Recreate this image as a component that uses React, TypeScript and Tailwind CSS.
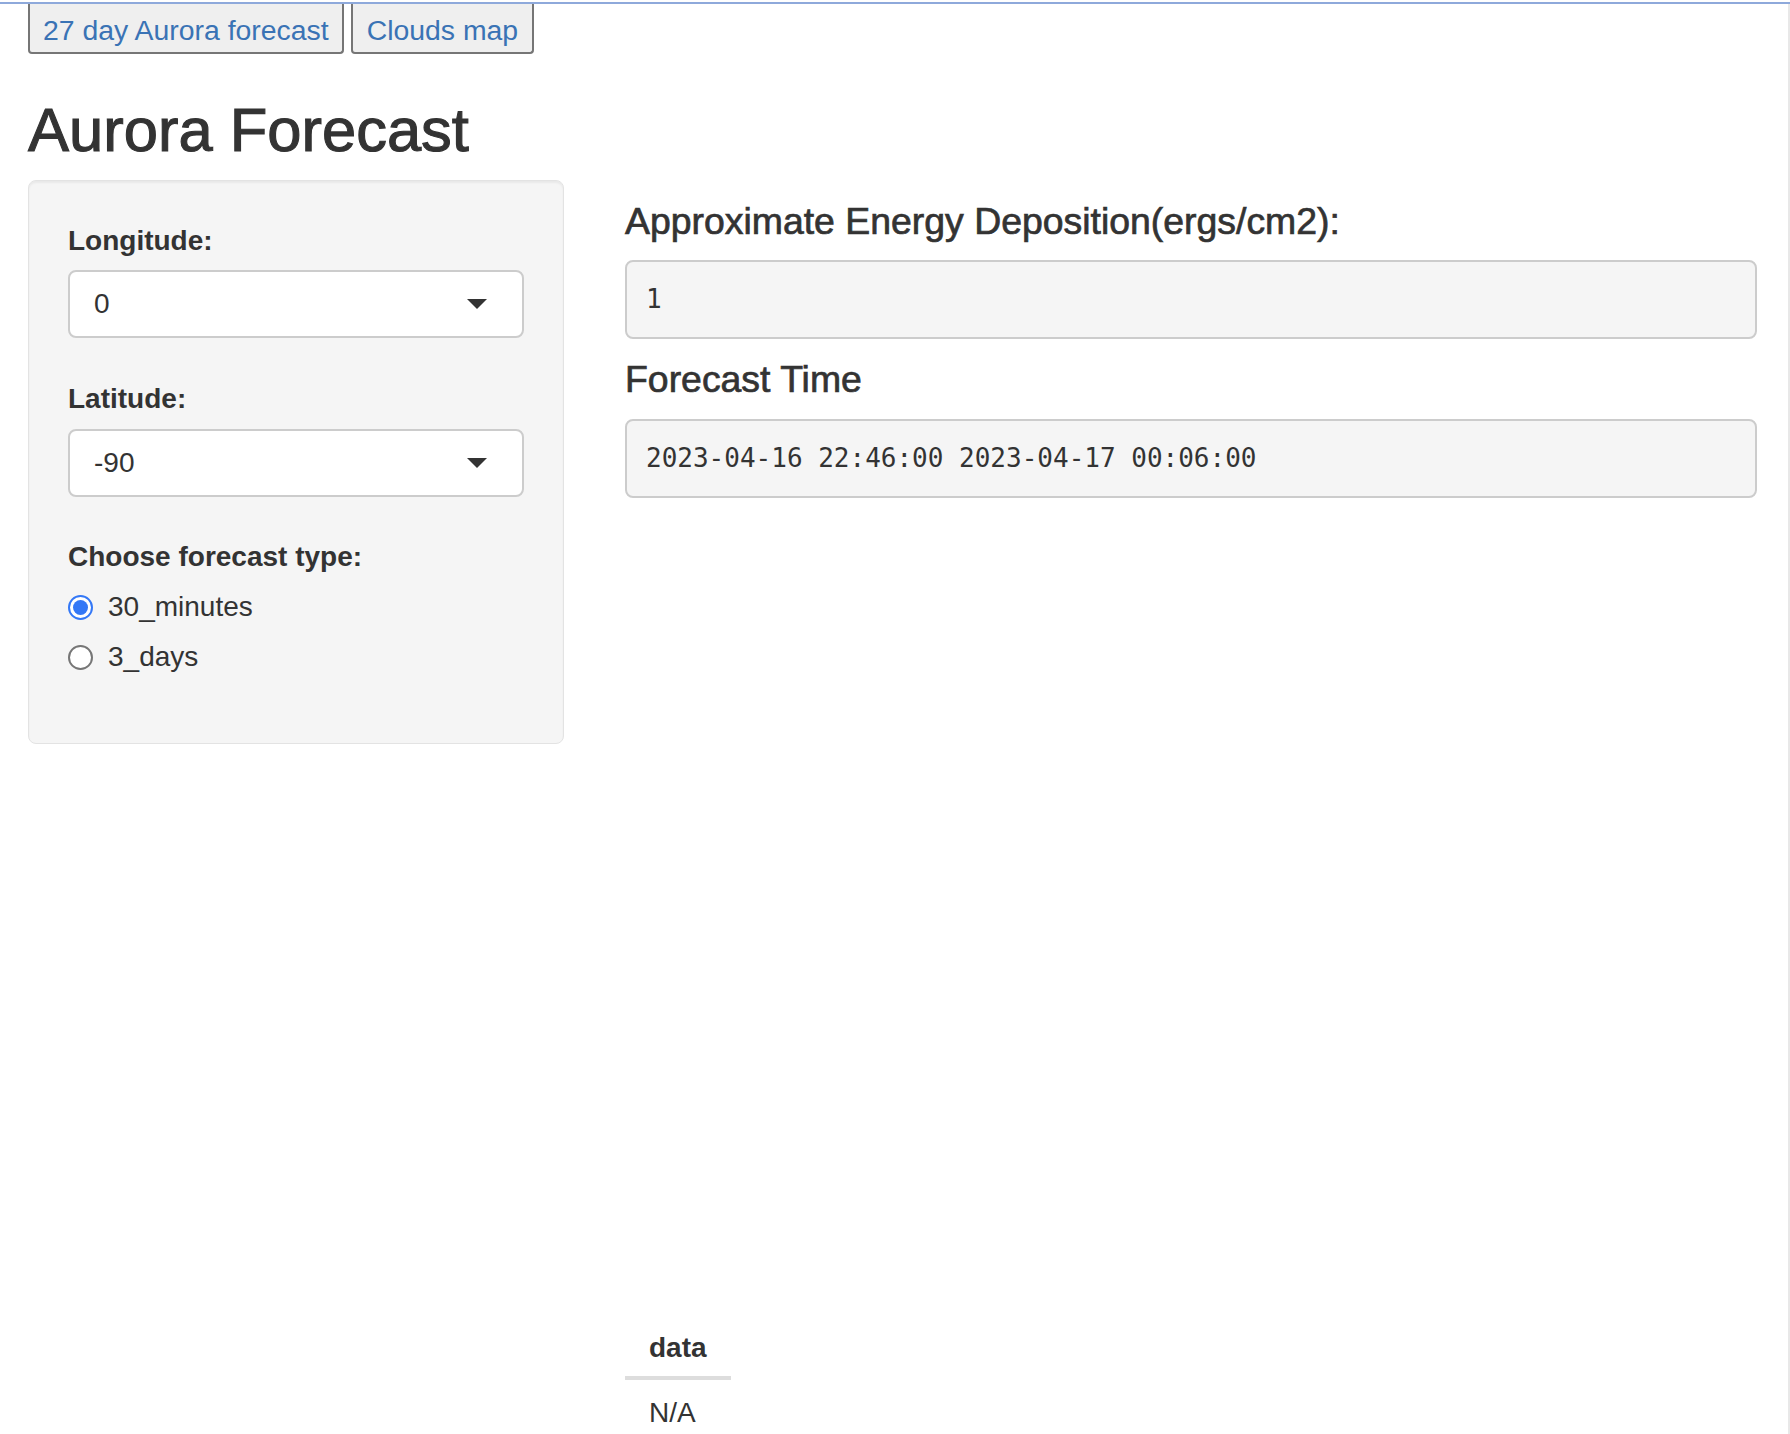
import React from 'react';

const Select = ({ value }: { value: string }) => (
  <div className="flex h-[68px] w-full items-center justify-between rounded-[8px] border-2 border-[#cccccc] bg-white pl-[24px] pr-[35px]">
    <span className="text-[28px] leading-[40px]">{value}</span>
    <span className="h-0 w-0 border-x-[10px] border-t-[10px] border-x-transparent border-t-[#333333]" />
  </div>
);

const Radio = ({ label, checked }: { label: string; checked?: boolean }) => (
  <div className="flex h-[40px] items-center gap-[15px]">
    {checked ? (
      <span className="flex h-[25px] w-[25px] items-center justify-center rounded-full border-2 border-[#3478f6] bg-white">
        <span className="h-[15px] w-[15px] rounded-full bg-[#3478f6]" />
      </span>
    ) : (
      <span className="h-[25px] w-[25px] rounded-full border-2 border-[#767676] bg-white" />
    )}
    <span className="text-[28px] leading-[40px]">{label}</span>
  </div>
);

const Verbatim = ({ children }: { children: React.ReactNode }) => (
  <pre className="rounded-[8px] border-2 border-[#cccccc] bg-[#f5f5f5] px-[19px] py-[19px] font-['DejaVu_Sans_Mono',monospace] text-[26px] leading-[37px] text-[#333333]">
    {children}
  </pre>
);

export default function App() {
  return (
    <div className="min-h-screen bg-white font-['Liberation_Sans',Arial,sans-serif] text-[#333333]">
      <div className="h-[2px]" />
      <div className="h-[2px] bg-[#8ea9db]" />

      <div className="border-r-2 border-[#e8e8e8] pl-[28px] pr-[31px] pb-[40px]">
        {/* top links */}
        <div className="flex gap-[7px]">
          <button className="h-[50px] rounded-b-[4px] border-2 border-t-0 border-[#767676] bg-[#efefef] px-[13px] pt-[4px] text-[28.4px] leading-[32px] text-[#3a73b5] self-start">
            27 day Aurora forecast
          </button>
          <button className="h-[50px] rounded-b-[4px] border-2 border-t-0 border-[#767676] bg-[#efefef] px-[14px] pt-[4px] text-[28.4px] leading-[32px] text-[#3a73b5] self-start">
            Clouds map
          </button>
        </div>

        <h2 className="mt-[43px] mb-[17px] text-[61.5px] leading-[66px] [-webkit-text-stroke:1.1px_#333333]">
          Aurora Forecast
        </h2>

        <div className="flex items-start gap-[61px]">
          {/* sidebar */}
          <div className="w-[536px] shrink-0 rounded-[8px] border border-[#e3e3e3] bg-[#f5f5f5] px-[39px] pt-[40px] pb-[66px] shadow-[inset_0_2px_2px_rgba(0,0,0,0.05)]">
            <label className="mb-[9px] block text-[28px] font-bold leading-[40px]">Longitude:</label>
            <Select value="0" />

            <label className="mt-[41px] mb-[10px] block text-[28px] font-bold leading-[40px]">Latitude:</label>
            <Select value="-90" />

            <label className="mt-[40px] mb-[10px] block text-[28px] font-bold leading-[40px]">Choose forecast type:</label>
            <div className="flex flex-col gap-[10px]">
              <Radio label="30_minutes" checked />
              <Radio label="3_days" />
            </div>
          </div>

          {/* main */}
          <div className="min-w-0 flex-1 pt-[21px]">
            <h4 className="mb-[19px] text-[37.4px] leading-[40px] [-webkit-text-stroke:0.7px_#333333]">
              Approximate Energy Deposition(ergs/cm2):
            </h4>
            <Verbatim>1</Verbatim>

            <h4 className="mt-[20px] mb-[20px] text-[37.4px] leading-[40px] [-webkit-text-stroke:0.7px_#333333]">
              Forecast Time
            </h4>
            <Verbatim>2023-04-16 22:46:00 2023-04-17 00:06:00</Verbatim>

            <div className="h-[822px]" />

            <table className="border-collapse text-[28px] leading-[40px]">
              <thead>
                <tr>
                  <th className="border-b-4 border-[#dddddd] px-[24px] pt-[8px] pb-[8px] text-left font-bold">data</th>
                </tr>
              </thead>
              <tbody>
                <tr>
                  <td className="px-[24px] pt-[13px] pb-[13px]">N/A</td>
                </tr>
              </tbody>
            </table>
          </div>
        </div>
      </div>
    </div>
  );
}
